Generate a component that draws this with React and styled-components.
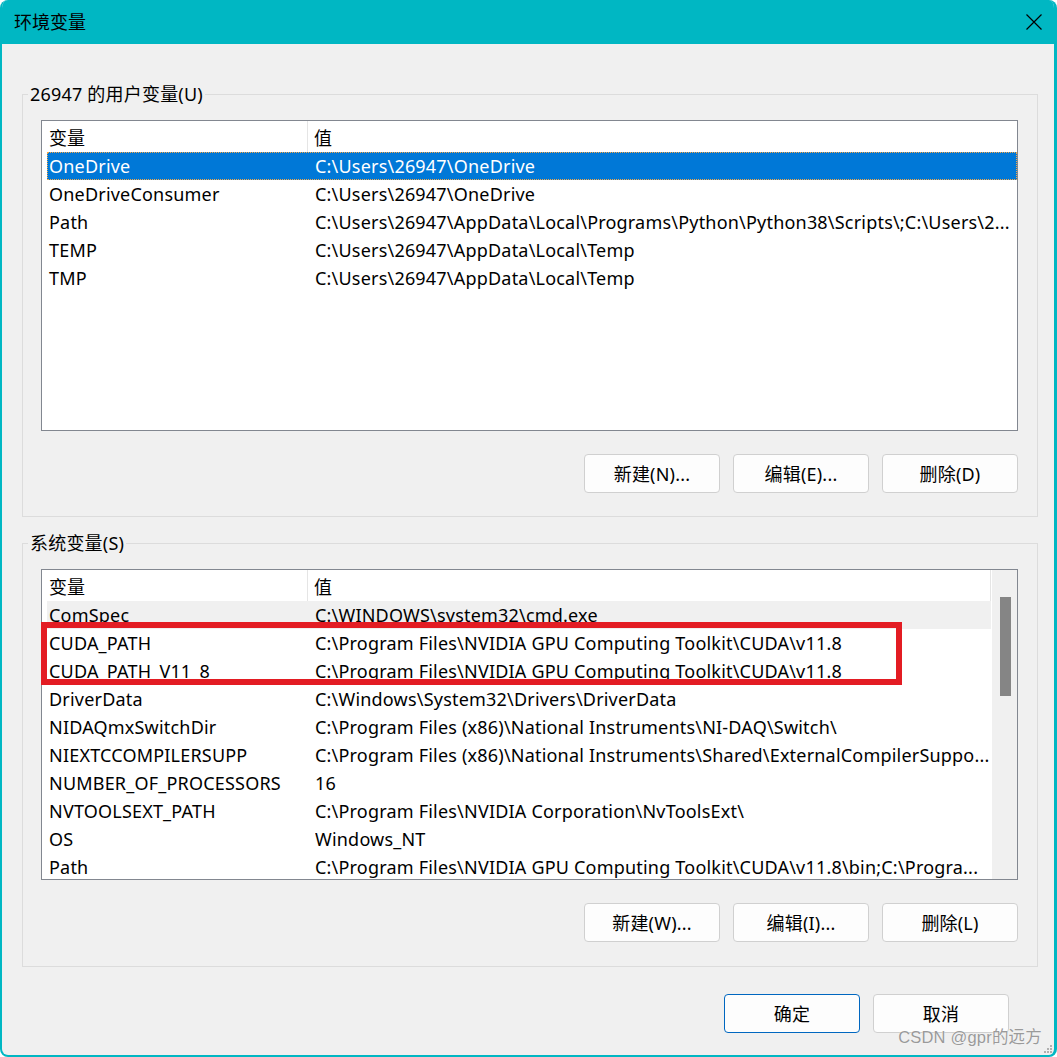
import React from "react";
import styled, { createGlobalStyle } from "styled-components";

const Global = createGlobalStyle`
  html, body { margin: 0; padding: 0; background: #ffffff; }
  body { font-family: "Noto Sans", "Noto Sans CJK SC", sans-serif; }
  * { box-sizing: border-box; }
`;

const FONT = `"Noto Sans", "Noto Sans CJK SC", sans-serif`;
const TEAL = "#00b7c3";

const Window = styled.div`
  position: relative;
  width: 1057px;
  height: 1057px;
  background: #f0f0f0;
  border-left: 2px solid ${TEAL};
  border-right: 3px solid ${TEAL};
  border-bottom: 2px solid ${TEAL};
  border-radius: 8px;
  overflow: hidden;
  display: flex;
  flex-direction: column;
  font-family: ${FONT};
  color: #000;
`;

const TitleBar = styled.div`
  height: 44px;
  flex: 0 0 44px;
  background: ${TEAL};
  display: flex;
  align-items: center;
  justify-content: space-between;
  padding: 0 15px 2px 14px;
  margin: 0 -3px 0 -2px;
`;

const Title = styled.div`
  font-size: 18px;
  font-family: "Noto Sans CJK SC", sans-serif;
  line-height: 20px;
  color: #000;
`;

const CloseBtn = styled.div`
  width: 16px;
  height: 16px;
  display: flex;
  margin-top: 1px;
`;

const Body = styled.div`
  padding: 50px 16px 0 20px;
  display: flex;
  flex-direction: column;
`;

const Group = styled.div`
  position: relative;
  border: 1px solid #dcdcdc;
  padding: 25px 19px ${(p) => p.$pb || 23}px 18px;
  margin-top: ${(p) => p.$mt || 0}px;
`;

const Legend = styled.div`
  position: absolute;
  top: -11px;
  left: 5px;
  padding: 0 2px;
  background: #f0f0f0;
  font-size: 18px;
  line-height: 20px;
  letter-spacing: 0.2px;
  font-family: ${FONT};
`;

const List = styled.div`
  position: relative;
  height: 311px;
  border: 1px solid #828790;
  background: #fff;
  display: flex;
`;

const ListMain = styled.div`
  flex: 1;
  min-width: 0;
  display: flex;
  flex-direction: column;
  overflow: hidden;
`;

const Header = styled.div`
  height: 31px;
  flex: 0 0 31px;
  display: grid;
  grid-template-columns: 266px 1fr;
  border-right: ${(p) => (p.$withScroll ? "1px solid #e5e5e5" : "none")};
`;

const HeaderCell = styled.div`
  display: flex;
  align-items: center;
  padding-left: ${(p) => (p.$first ? 7 : 6)}px;
  padding-top: 1px;
  font-size: 18px;
  font-family: "Noto Sans CJK SC", sans-serif;
  border-right: ${(p) => (p.$first ? "1px solid #e5e5e5" : "none")};
`;

const Row = styled.div`
  height: 28px;
  flex: 0 0 28px;
  margin-left: 5px;
  display: grid;
  grid-template-columns: 268px 1fr;
  align-items: center;
  font-size: 18px;
  letter-spacing: 0.2px;
  white-space: nowrap;
  background: ${(p) => (p.$selected ? "#0078d7" : p.$hover ? "#f0f0f0" : "transparent")};
  color: ${(p) => (p.$selected ? "#fff" : "#000")};
  outline: ${(p) => (p.$selected ? "1px dotted #f7a848" : "none")};
  outline-offset: -1px;
`;

const Cell = styled.div`
  overflow: hidden;
  text-overflow: clip;
  padding-left: ${(p) => (p.$first ? 2 : 0)}px;
  padding-top: 1px;
  line-height: 27px;
`;

const ScrollTrack = styled.div`
  width: 26px;
  flex: 0 0 26px;
  background: #f0f0f0;
  border-left: 1px solid #ffffff;
  padding: 27px 7px 0 8px;
`;

const ScrollThumb = styled.div`
  width: 11px;
  height: 99px;
  background: #858585;
`;

const Highlight = styled.div`
  position: absolute;
  left: -1px;
  top: 52px;
  width: 861px;
  height: 63px;
  border: 6px solid #e31c23;
  pointer-events: none;
`;

const ButtonRow = styled.div`
  display: flex;
  justify-content: flex-end;
  gap: 13px;
  margin-top: 23px;
`;

const Button = styled.div`
  width: 136px;
  height: 39px;
  border: 1px solid ${(p) => (p.$default ? "#0067c0" : "#d0d0d0")};
  border-radius: 4px;
  background: #fdfdfd;
  display: flex;
  align-items: center;
  justify-content: center;
  font-size: 18px;
  letter-spacing: 0.2px;
  font-family: ${FONT};
  padding-bottom: 1px;
`;

const Footer = styled.div`
  display: flex;
  justify-content: flex-end;
  gap: 13px;
  margin-top: 27px;
  padding-right: 29px;
`;

const Watermark = styled.div`
  position: absolute;
  right: 12px;
  bottom: 7px;
  font-family: "Liberation Sans", "Noto Sans CJK SC", sans-serif;
  font-size: 16.5px;
  color: #9a9a9a;
  text-shadow: 0 0 1px #ffffff;
  letter-spacing: 0.2px;
`;

const Grip = styled.svg`
  position: absolute;
  right: 1px;
  bottom: 1px;
`;

const userVars = [
  ["OneDrive", "C:\\Users\\26947\\OneDrive"],
  ["OneDriveConsumer", "C:\\Users\\26947\\OneDrive"],
  ["Path", "C:\\Users\\26947\\AppData\\Local\\Programs\\Python\\Python38\\Scripts\\;C:\\Users\\2..."],
  ["TEMP", "C:\\Users\\26947\\AppData\\Local\\Temp"],
  ["TMP", "C:\\Users\\26947\\AppData\\Local\\Temp"],
];

const sysVars = [
  ["ComSpec", "C:\\WINDOWS\\system32\\cmd.exe"],
  ["CUDA_PATH", "C:\\Program Files\\NVIDIA GPU Computing Toolkit\\CUDA\\v11.8"],
  ["CUDA_PATH_V11_8", "C:\\Program Files\\NVIDIA GPU Computing Toolkit\\CUDA\\v11.8"],
  ["DriverData", "C:\\Windows\\System32\\Drivers\\DriverData"],
  ["NIDAQmxSwitchDir", "C:\\Program Files (x86)\\National Instruments\\NI-DAQ\\Switch\\"],
  ["NIEXTCCOMPILERSUPP", "C:\\Program Files (x86)\\National Instruments\\Shared\\ExternalCompilerSuppo..."],
  ["NUMBER_OF_PROCESSORS", "16"],
  ["NVTOOLSEXT_PATH", "C:\\Program Files\\NVIDIA Corporation\\NvToolsExt\\"],
  ["OS", "Windows_NT"],
  ["Path", "C:\\Program Files\\NVIDIA GPU Computing Toolkit\\CUDA\\v11.8\\bin;C:\\Progra..."],
];

function VarList({ rows, selected, hover, withScroll, children }) {
  return (
    <List>
      <ListMain>
        <Header $withScroll={withScroll}>
          <HeaderCell $first>变量</HeaderCell>
          <HeaderCell>值</HeaderCell>
        </Header>
        {rows.map(([k, v], i) => (
          <Row key={k + i} $selected={i === selected} $hover={i === hover}>
            <Cell $first>{k}</Cell>
            <Cell>{v}</Cell>
          </Row>
        ))}
      </ListMain>
      {withScroll && (
        <ScrollTrack>
          <ScrollThumb />
        </ScrollTrack>
      )}
      {children}
    </List>
  );
}

export default function App() {
  return (
    <>
      <Global />
      <Window>
        <TitleBar>
          <Title>环境变量</Title>
          <CloseBtn>
            <svg width="16" height="16" viewBox="0 0 16 16">
              <path d="M0.5 0.5 L15.5 15.5 M15.5 0.5 L0.5 15.5" stroke="#000" strokeWidth="1.2" fill="none" />
            </svg>
          </CloseBtn>
        </TitleBar>
        <Body>
          <Group>
            <Legend>26947 的用户变量(U)</Legend>
            <VarList rows={userVars} selected={0} />
            <ButtonRow>
              <Button>新建(N)...</Button>
              <Button>编辑(E)...</Button>
              <Button>删除(D)</Button>
            </ButtonRow>
          </Group>
          <Group $mt={26} $pb={24}>
            <Legend>系统变量(S)</Legend>
            <VarList rows={sysVars} hover={0} withScroll>
              <Highlight />
            </VarList>
            <ButtonRow>
              <Button>新建(W)...</Button>
              <Button>编辑(I)...</Button>
              <Button>删除(L)</Button>
            </ButtonRow>
          </Group>
          <Footer>
            <Button $default>确定</Button>
            <Button>取消</Button>
          </Footer>
        </Body>
        <Watermark>CSDN @gpr的远方</Watermark>
        <Grip width="10" height="10" viewBox="0 0 10 10">
          <rect x="7" y="1" width="2" height="2" fill="#b0b0b0" />
          <rect x="4" y="4" width="2" height="2" fill="#b0b0b0" />
          <rect x="7" y="4" width="2" height="2" fill="#b0b0b0" />
          <rect x="1" y="7" width="2" height="2" fill="#b0b0b0" />
          <rect x="4" y="7" width="2" height="2" fill="#b0b0b0" />
          <rect x="7" y="7" width="2" height="2" fill="#b0b0b0" />
        </Grip>
      </Window>
    </>
  );
}
